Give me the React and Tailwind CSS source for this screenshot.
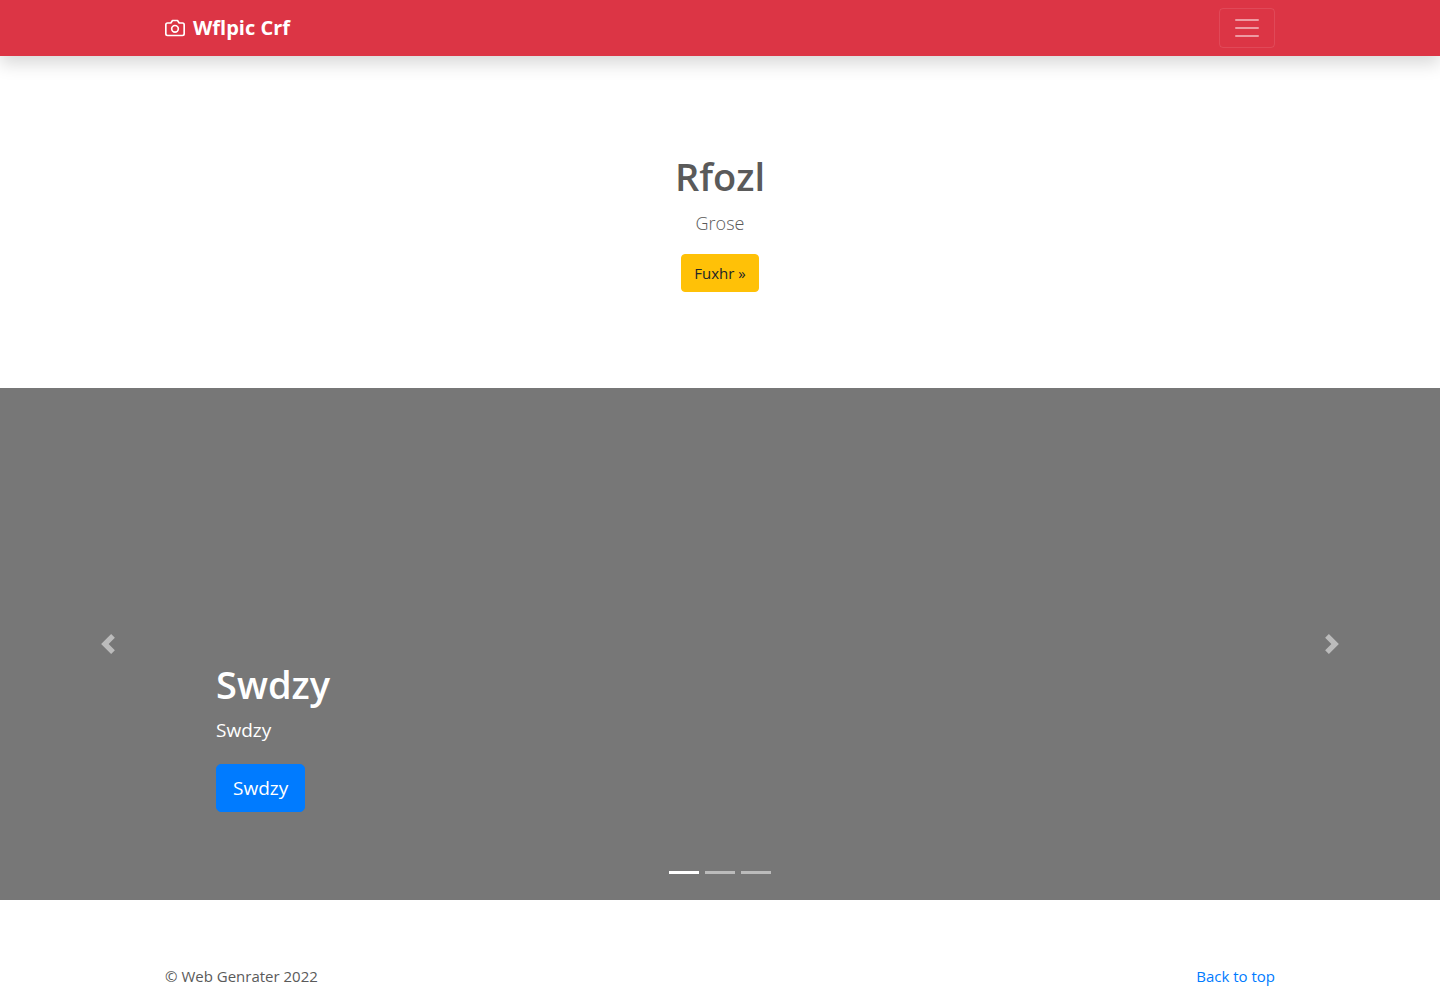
import React, { useState } from "react";

function CameraIcon() {
  return (
    <svg className="h-5 w-5" viewBox="0 0 24 24" fill="none" stroke="currentColor" strokeWidth="2" strokeLinecap="round" strokeLinejoin="round" aria-hidden="true">
      <path d="M23 19a2 2 0 0 1-2 2H3a2 2 0 0 1-2-2V8a2 2 0 0 1 2-2h4l2-3h6l2 3h4a2 2 0 0 1 2 2z" />
      <circle cx="12" cy="13" r="4" />
    </svg>
  );
}

function Header() {
  return (
    <header className="relative z-10 bg-[#dc3545] shadow-[0_8px_16px_rgba(0,0,0,0.15)]">
      <div className="mx-auto flex max-w-[1140px] items-center justify-between px-[15px] py-2">
        <a href="#top" className="flex items-center gap-2 text-white">
          <CameraIcon />
          <strong className="text-[20px] leading-[30px] font-bold">Wflpic Crf</strong>
        </a>
        <button type="button" aria-label="Toggle navigation" className="flex h-10 w-14 items-center justify-center rounded border border-white/10">
          <svg className="h-[30px] w-[30px]" viewBox="0 0 30 30" stroke="rgba(255,255,255,0.5)" strokeWidth="2" strokeLinecap="round" strokeMiterlimit="10" aria-hidden="true">
            <path d="M4 7h22M4 15h22M4 23h22" />
          </svg>
        </button>
      </div>
    </header>
  );
}

function Hero() {
  return (
    <section className="flex flex-col items-center px-[15px] py-24 text-center">
      <h1 className="mb-2 text-[38px] leading-[48px] font-semibold">Rfozl</h1>
      <p className="mb-4 text-[18px] leading-[30px] font-light">Grose</p>
      <a href="#carousel" className="rounded border border-[#ffc107] bg-[#ffc107] px-3 py-1.5 text-[15px] leading-6 text-[#212529]">Fuxhr »</a>
    </section>
  );
}

const slides = [0, 1, 2];

function Carousel() {
  const [active, setActive] = useState(0);
  const step = (d) => setActive((active + d + slides.length) % slides.length);
  return (
    <section id="carousel" className="relative grid h-[512px] grid-cols-[15%_1fr_15%] bg-[#777]">
      <button type="button" aria-label="Previous" onClick={() => step(-1)} className="flex items-center justify-center opacity-50">
        <svg className="h-5 w-5" viewBox="0 0 8 8" fill="#fff" aria-hidden="true">
          <path d="M5.25 0l-4 4 4 4 1.5-1.5-2.5-2.5 2.5-2.5-1.5-1.5z" />
        </svg>
      </button>
      <div className="flex flex-col items-start justify-end pb-[88px] text-white">
        <h2 className="mb-2 text-[38px] leading-[48px] font-semibold">Swdzy</h2>
        <p className="mb-5 text-[19px] leading-7">Swdzy</p>
        <a href="#carousel" className="rounded-[5px] border border-[#007bff] bg-[#007bff] px-4 py-2 text-[19px] leading-[30px]">Swdzy</a>
      </div>
      <button type="button" aria-label="Next" onClick={() => step(1)} className="flex items-center justify-center opacity-50">
        <svg className="h-5 w-5" viewBox="0 0 8 8" fill="#fff" aria-hidden="true">
          <path d="M2.75 0l-1.5 1.5 2.5 2.5-2.5 2.5 1.5 1.5 4-4-4-4z" />
        </svg>
      </button>
      <div className="absolute inset-x-0 bottom-4 flex justify-center gap-1.5">
        {slides.map((i) => (
          <button key={i} type="button" aria-label={`Slide ${i + 1}`} onClick={() => setActive(i)} className={i === active ? "py-2.5" : "py-2.5 opacity-50"}>
            <span className="block h-[3px] w-[30px] bg-white" />
          </button>
        ))}
      </div>
    </section>
  );
}

export default function App() {
  return (
    <div id="top" className="bg-white font-['Open_Sans','Noto_Sans',sans-serif] text-[#5a5a5a]">
      <Header />
      <main>
        <Hero />
        <Carousel />
      </main>
      <footer className="mx-auto mt-16 flex max-w-[1140px] justify-between px-[15px] text-[15px] leading-6">
        <p>© Web Genrater 2022</p>
        <a href="#top" className="text-[#007bff]">Back to top</a>
      </footer>
    </div>
  );
}
